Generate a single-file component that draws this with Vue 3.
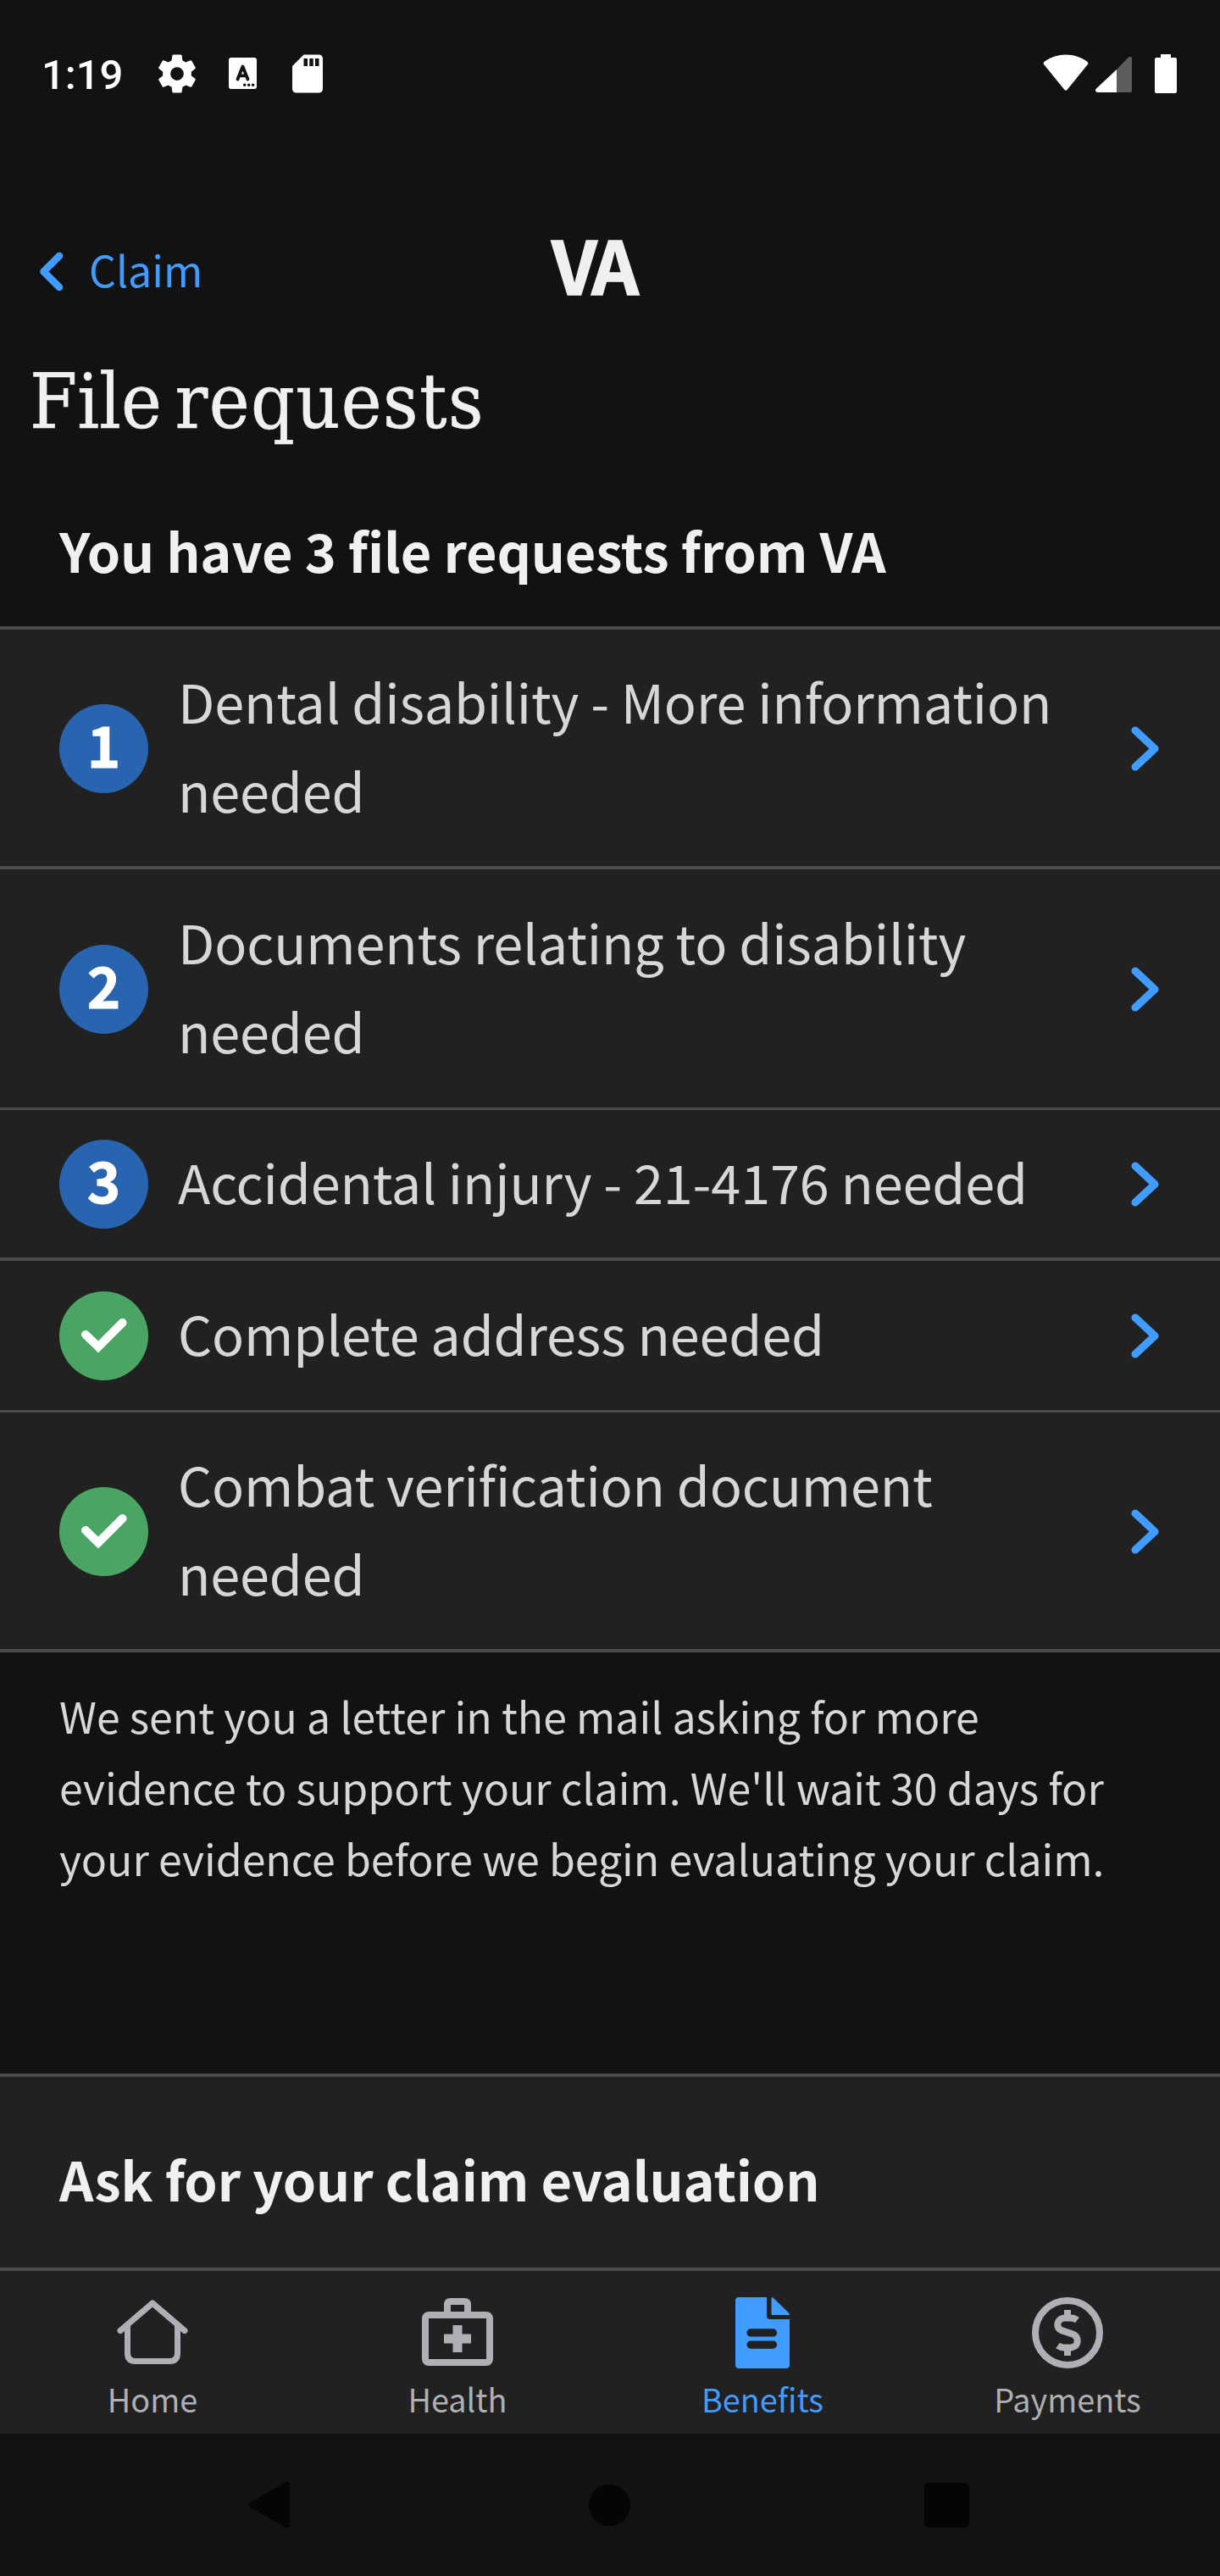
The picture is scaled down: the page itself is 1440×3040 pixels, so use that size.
<script setup>
const requests = [
  { badge: '1', lines: ['Dental disability - More information', 'needed'] },
  { badge: '2', lines: ['Documents relating to disability', 'needed'] },
  { badge: '3', lines: ['Accidental injury - 21-4176 needed'] },
  { badge: null, lines: ['Complete address needed'] },
  { badge: null, lines: ['Combat verification document', 'needed'] },
]
const note = [
  'We sent you a letter in the mail asking for more',
  "evidence to support your claim. We'll wait 30 days for",
  'your evidence before we begin evaluating your claim.',
]
</script>

<template>
  <div class="screen">
    <div class="status">
      <span class="time">1:19</span>
      <svg class="gear" viewBox="0 0 24 24"><path fill="#fff" fill-rule="evenodd" d="M19.43 12.98c.04-.32.07-.64.07-.98s-.03-.66-.07-.98l2.11-1.65c.19-.15.24-.42.12-.64l-2-3.46c-.12-.22-.39-.3-.61-.22l-2.49 1c-.52-.4-1.08-.73-1.69-.98l-.38-2.65C14.46 2.18 14.25 2 14 2h-4c-.25 0-.46.18-.49.42l-.38 2.65c-.61.25-1.17.59-1.69.98l-2.49-1c-.23-.09-.49 0-.61.22l-2 3.46c-.13.22-.07.49.12.64l2.11 1.65c-.04.32-.07.65-.07.98s.03.66.07.98l-2.11 1.65c-.19.15-.24.42-.12.64l2 3.46c.12.22.39.3.61.22l2.49-1c.52.4 1.08.73 1.69.98l.38 2.65c.03.24.24.42.49.42h4c.25 0 .46-.18.49-.42l.38-2.65c.61-.25 1.17-.59 1.69-.98l2.49 1c.23.09.49 0 .61-.22l2-3.46c.12-.22.07-.49-.12-.64zM12 15.500A3.500 3.500 0 1 1 12 8.500a3.500 3.500 0 0 1 0 7z"/></svg>
      <svg class="abox" viewBox="0 0 33 37"><rect width="33" height="37" rx="3" fill="#fff"/><path d="M10.500 25.500L16.500 10.500L22.500 25.500M12.500 21.300H20.500" fill="none" stroke="#121212" stroke-width="3.800" stroke-linecap="round" stroke-linejoin="round"/><g fill="#121212"><circle cx="18.700" cy="32.300" r="1.700"/><circle cx="23.700" cy="32.300" r="1.700"/><circle cx="28.600" cy="32.300" r="1.700"/></g></svg>
      <svg class="sd" viewBox="0 0 24 24"><path fill="#fff" d="M18 2h-8L4.020 8 4 20c0 1.100.9 2 2 2h12c1.100 0 2-.9 2-2V4c0-1.100-.9-2-2-2zm-6 6h-2V4h2v4zm3 0h-2V4h2v4zm3 0h-2V4h2v4z"/></svg>
      <svg class="radio" viewBox="0 0 158 48">
        <path fill="#fff" d="M1.500 12.500Q-.5 10.500 2 8.500C17 -2.300 37 -2.300 52 8.500Q54.500 10.500 52.500 12.500L28.500 42Q27 43.500 25.500 42Z"/>
        <path fill="#fff" d="M87 18V45H65Q60.500 44 62.500 41Z"/>
        <path fill="#5c5c5c" d="M87 18L100.500 4Q103.500 2 105 4V43Q105 45 103 45H87Z"/>
        <path fill="#fff" d="M139 0H151V4H156Q158 4 158 6V44Q158 46 156 46H134Q132 46 132 44V6Q132 4 134 4H139Z"/>
      </svg>
    </div>

    <header class="top">
      <svg class="back" viewBox="0 0 29 47"><path d="M24 5L5.500 23.500L24 42" fill="none" stroke="#409cff" stroke-width="8.500" stroke-linecap="round" stroke-linejoin="round"/></svg>
      <span class="claim">Claim</span>
      <span class="logo">VA</span>
    </header>

    <h1 class="title">File <span>requests</span></h1>
    <h2 class="heading">You have 3 file requests from VA</h2>

    <ul class="list">
      <li v-for="(r, i) in requests" :key="i" class="row">
        <span v-if="r.badge" class="badge"><b>{{ r.badge }}</b></span>
        <span v-else class="badge done">
          <svg viewBox="0 0 105 105"><path d="M31 51L46 65.500L74.500 37" fill="none" stroke="#fff" stroke-width="10" stroke-linecap="round"/></svg>
        </span>
        <span class="label"><span v-for="l in r.lines" :key="l" class="line">{{ l }}</span></span>
        <svg class="chev" viewBox="0 0 33 53"><path d="M5 5L28 26.500L5 48" fill="none" stroke="#409cff" stroke-width="9.200" stroke-linecap="round" stroke-linejoin="round"/></svg>
      </li>
    </ul>

    <p class="note"><span v-for="l in note" :key="l" class="line">{{ l }}</span></p>

    <section class="ask"><h2>Ask for your claim evaluation</h2></section>

    <nav class="tabs">
      <a class="tab">
        <svg viewBox="0 0 84 84"><path d="M4 39.500L42 7L80 39.500" fill="none" stroke="currentColor" stroke-width="7" stroke-linecap="round" stroke-linejoin="round"/><path d="M12.500 34V66Q12.500 75.500 22 75.500H62Q71.500 75.500 71.500 66V34" fill="none" stroke="currentColor" stroke-width="7"/></svg>
        <span>Home</span>
      </a>
      <a class="tab">
        <svg viewBox="0 0 84 84"><rect x="4" y="21" width="76" height="56" rx="4" fill="none" stroke="currentColor" stroke-width="8"/><path d="M30 20V9Q30 5 34 5H50Q54 5 54 9V20" fill="none" stroke="currentColor" stroke-width="8"/><path d="M42 33V65M26 49H58" stroke="currentColor" stroke-width="11"/></svg>
        <span>Health</span>
      </a>
      <a class="tab active">
        <svg viewBox="0 0 84 84"><path fill="currentColor" fill-rule="evenodd" d="M14 0H47V22Q47 26 51 26H74V80Q74 84 70 84H14Q10 84 10 80V4Q10 0 14 0ZM28 37.300A4.600 4.600 0 0 0 28 46.500H54.500A4.600 4.600 0 0 0 54.500 37.300ZM28 51.500A4.600 4.600 0 0 0 28 60.700H54.500A4.600 4.600 0 0 0 54.500 51.500ZM52.500 0Q54.500 0 56 2L73 18.500Q74 19.500 74 21H52.500Z"/></svg>
        <span>Benefits</span>
      </a>
      <a class="tab">
        <svg viewBox="0 0 84 84"><circle cx="42" cy="42" r="38" fill="none" stroke="currentColor" stroke-width="8"/><path d="M42 15V24M42 60V69" stroke="currentColor" stroke-width="8"/><path d="M53.500 27Q50 24.500 46 24.500H40C33 24.500 30.300 28.500 30.300 32.500C30.300 44.500 53.700 38 53.700 51.500C53.700 56.500 50 59.500 45 59.500H38Q34 59.500 30.500 57" fill="none" stroke="currentColor" stroke-width="8"/></svg>
        <span>Payments</span>
      </a>
    </nav>

    <div class="sysnav">
      <svg class="s-back" viewBox="0 0 49 56"><path fill="#050505" d="M1.500 26L44 1Q49 -1 49 4V52Q49 57 44 55L1.500 30Q-1 28 1.500 26Z"/></svg>
      <i class="s-home"></i>
      <i class="s-recent"></i>
    </div>
  </div>
</template>

<style>
body { margin: 0; background: #121212; }
</style>

<style scoped>
.screen { width: 1440px; height: 3040px; display: flex; flex-direction: column; overflow: hidden; background: #121212; color: #f0f0f0; font-family: "Noto Sans CJK SC", "Noto Sans", sans-serif; }
h1, h2, ul, p { margin: 0; padding: 0; list-style: none; }
svg { display: block; flex: none; }
.status { height: 173px; box-sizing: border-box; padding: 0 51px 0 49px; display: flex; align-items: center; flex: none; color: #fff; }
.time { font: 500 49px/58px Roboto, sans-serif; width: 133px; margin-top: 4px; }
.gear { width: 54px; height: 54px; }
.abox { width: 33px; height: 37px; margin-left: 34px; }
.sd { width: 54px; height: 54px; margin-left: 33px; }
.radio { width: 158px; height: 48px; margin: 2px 0 0 auto; }
.top { display: flex; align-items: flex-start; margin-top: 85px; height: 156px; flex: none; }
.back { width: 29px; height: 47px; margin: 39px 0 0 46px; }
.claim { font-size: 50px; line-height: 84px; margin: 17px 0 0 30px; width: 546px; color: #409cff; }
.logo { font-size: 87px; line-height: 104px; font-weight: 700; letter-spacing: -5px; -webkit-text-stroke: 1.5px #f0f0f0; }
.title { font: 400 90px/120px "DejaVu Serif Condensed", "DejaVu Serif", serif; padding-left: 35px; height: 182px; flex: none; word-spacing: -10px; -webkit-text-stroke: 0.6px #f0f0f0; }
.title span { letter-spacing: 1.4px; }
.heading { font-size: 63px; line-height: 105px; font-weight: 700; padding: 0 70px 38px; letter-spacing: -0.15px; }
.list { border-top: 4px solid #4b4b4b; background: #212121; }
.row { display: flex; align-items: center; padding: 35px 70px 34px; border-bottom: 4px solid #4b4b4b; }
.row:nth-child(even) { padding: 36px 70px 35px; border-bottom-width: 3px; }
.badge { width: 105px; height: 105px; border-radius: 50%; background: #2864b0; color: #fff; flex: none; text-align: center; }
.badge b { display: block; font-size: 67px; line-height: 91px; font-weight: 700; -webkit-text-stroke: 1px #fff; }
.done { background: #4aa564; }
.label { margin: -4px 0 4px 35px; flex: 1; font-size: 63px; line-height: 105px; letter-spacing: -0.15px; color: #d6d7d9; }
.line { display: block; white-space: nowrap; }
.chev { width: 33px; height: 53px; margin-right: 2px; }
.note { padding: 32px 70px 0; font-size: 50px; line-height: 84px; letter-spacing: -0.02px; color: #d6d7d9; }
.ask { margin-top: auto; height: 158px; padding: 67px 70px 0; border-top: 4px solid #4b4b4b; background: #212121; flex: none; }
.ask h2 { font-size: 63px; line-height: 105px; font-weight: 700; letter-spacing: -0.1px; }
.tabs { height: 192px; border-top: 4px solid #4b4b4b; background: #212121; display: flex; flex: none; }
.tab { flex: 1; display: flex; flex-direction: column; align-items: center; padding-top: 31px; color: #aeb0b5; font-size: 37.8px; line-height: 56px; }
.tab svg { width: 84px; height: 84px; margin-bottom: 8px; }
.active { color: #409cff; }
.sysnav { height: 168px; display: flex; align-items: center; flex: none; }
.s-back { width: 49px; height: 56px; margin-left: 293px; }
.s-home { width: 49px; height: 49px; border-radius: 50%; background: #050505; margin-left: 353px; }
.s-recent { width: 53px; height: 53px; border-radius: 5px; background: #050505; margin-left: 347px; }
</style>
